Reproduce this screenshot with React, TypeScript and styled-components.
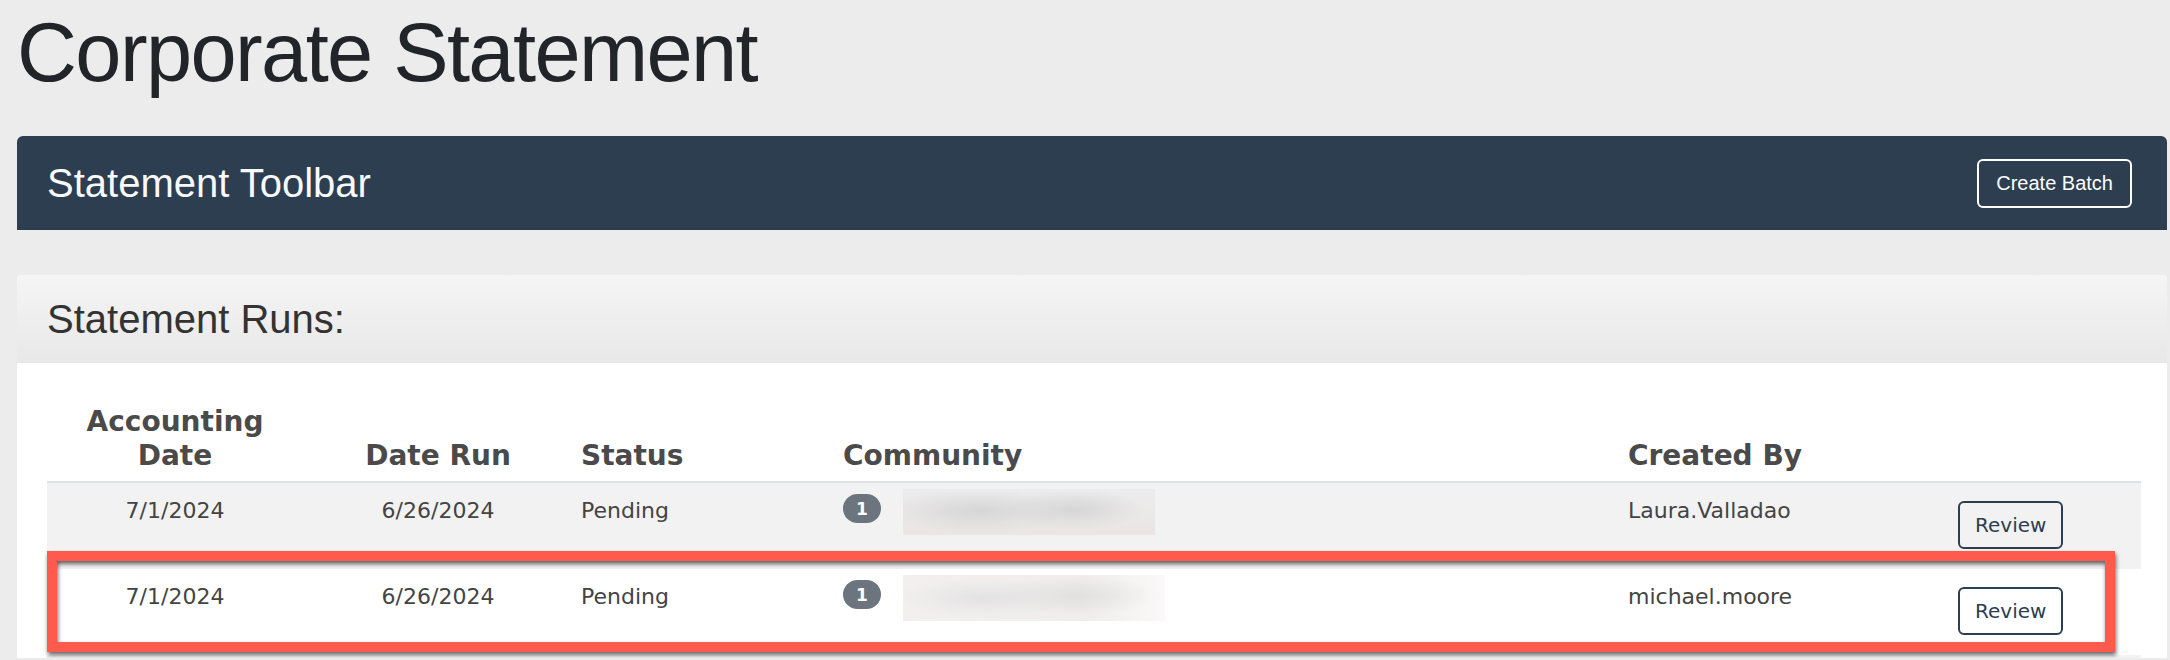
import React from "react";
import styled, { createGlobalStyle } from "styled-components";

const GlobalStyle = createGlobalStyle`
  html, body { margin: 0; padding: 0; background: #ececec; }
  body { font-family: "Liberation Sans", Arial, sans-serif; overflow: hidden; }
  * { box-sizing: border-box; }
`;

const COLS = "256px 270px 262px 785px 330px 1fr";

const Page = styled.div`
  padding: 0 3px 0 17px;
`;

const Title = styled.h1`
  margin: 8px 0 38px;
  font-family: "Liberation Sans", Arial, sans-serif;
  font-size: 83px;
  letter-spacing: -1.6px;
  line-height: 90px;
  font-weight: 400;
  color: #212529;
`;

const Toolbar = styled.div`
  height: 94px;
  display: flex;
  align-items: center;
  justify-content: space-between;
  padding: 0 35px 0 30px;
  background: #2c3e50;
  border-radius: 6px 6px 0 0;
`;

const ToolbarTitle = styled.h2`
  margin: 0;
  font-size: 40px;
  line-height: 1;
  font-weight: 400;
  color: #f8f9fa;
`;

const LightButton = styled.button`
  font-family: "Liberation Sans", Arial, sans-serif;
  font-size: 20px;
  line-height: 25px;
  padding: 10px 17px;
  border: 2px solid #ffffff;
  border-radius: 6px;
  background: transparent;
  color: #ffffff;
`;

const Panel = styled.section`
  margin-top: 45px;
  background: #ffffff;
  border-radius: 4px 4px 0 0;
`;

const PanelHeader = styled.div`
  height: 88px;
  display: flex;
  align-items: center;
  padding: 0 30px;
  background: linear-gradient(#f5f5f5, #e8e8e8);
  border-radius: 4px 4px 0 0;
`;

const PanelTitle = styled.h3`
  margin: 0;
  font-size: 40px;
  line-height: 1;
  font-weight: 400;
  color: #333333;
`;

const PanelBody = styled.div`
  padding: 42px 26px 0 30px;
`;

const HeadRow = styled.div`
  display: grid;
  grid-template-columns: ${COLS};
  align-items: end;
  border-bottom: 2px solid #dee2e6;
`;

const Th = styled.div<{ $center?: boolean }>`
  padding: 0 8px 8px;
  font-family: "DejaVu Sans", Verdana, sans-serif;
  font-weight: 700;
  font-size: 28px;
  line-height: 34px;
  color: #4a4a4a;
  text-align: ${(p) => (p.$center ? "center" : "left")};
`;

const Row = styled.div<{ $striped?: boolean; $last?: boolean }>`
  position: relative;
  display: grid;
  grid-template-columns: ${COLS};
  background: ${(p) => (p.$striped ? "#f2f2f2" : "#ffffff")};
  border-bottom: ${(p) => (p.$last ? "3px solid #f2f2f2" : "none")};
`;

const Td = styled.div<{ $center?: boolean }>`
  padding: 13px 8px 20px;
  font-family: "DejaVu Sans", Verdana, sans-serif;
  font-size: 22px;
  line-height: 29px;
  color: #444444;
  text-align: ${(p) => (p.$center ? "center" : "left")};
`;

const CommunityCell = styled.div`
  display: flex;
  align-items: flex-start;
  gap: 22px;
  padding: 6px 8px 0;
`;

const Badge = styled.span`
  margin-top: 5px;
  display: inline-flex;
  align-items: center;
  justify-content: center;
  width: 38px;
  height: 29px;
  border-radius: 15px;
  background: #6c757d;
  color: #ffffff;
  font-family: "DejaVu Sans", Verdana, sans-serif;
  font-weight: 700;
  font-size: 17px;
`;

const Redacted = styled.div<{ $w: number; $onGray?: boolean }>`
  width: ${(p) => p.$w}px;
  height: 46px;
  background: ${(p) =>
    p.$onGray
      ? `radial-gradient(ellipse 90px 22px at 30% 48%, #d6d6d6, rgba(214,214,214,0) 100%),
         radial-gradient(ellipse 70px 20px at 68% 45%, #d6d6d6, rgba(214,214,214,0) 100%),
         linear-gradient(#ececec, #ebe5e5)`
      : `radial-gradient(ellipse 90px 20px at 32% 50%, #e3e3e3, rgba(227,227,227,0) 100%),
         radial-gradient(ellipse 80px 20px at 66% 45%, #e2dfdf, rgba(226,223,223,0) 100%),
         linear-gradient(90deg, #f3efef, #f1eded 70%, #faf8f8)`};
`;

const ActionCell = styled.div`
  padding: 18px 8px 20px;
`;

const ReviewButton = styled.button`
  font-family: "DejaVu Sans", Verdana, sans-serif;
  font-size: 20px;
  line-height: 30px;
  padding: 7px 15px;
  border: 2px solid #2c3e50;
  border-radius: 6px;
  background: transparent;
  color: #2c3e50;
`;

const Highlight = styled.div`
  position: absolute;
  top: -18px;
  left: 0;
  right: 26px;
  height: 101px;
  border: 10px solid #ff5a4e;
  filter: drop-shadow(1px 3px 2px rgba(0, 0, 0, 0.6));
  pointer-events: none;
`;

type Run = {
  accounting: string;
  dateRun: string;
  status: string;
  count: number;
  redactedWidth: number;
  createdBy: string;
};

const runs: Run[] = [
  { accounting: "7/1/2024", dateRun: "6/26/2024", status: "Pending", count: 1, redactedWidth: 252, createdBy: "Laura.Valladao" },
  { accounting: "7/1/2024", dateRun: "6/26/2024", status: "Pending", count: 1, redactedWidth: 262, createdBy: "michael.moore" },
];

export default function App() {
  return (
    <>
      <GlobalStyle />
      <Page>
        <Title>Corporate Statement</Title>
        <Toolbar>
          <ToolbarTitle>Statement Toolbar</ToolbarTitle>
          <LightButton>Create Batch</LightButton>
        </Toolbar>
        <Panel>
          <PanelHeader>
            <PanelTitle>Statement Runs:</PanelTitle>
          </PanelHeader>
          <PanelBody>
            <HeadRow>
              <Th $center>
                Accounting
                <br />
                Date
              </Th>
              <Th $center>Date Run</Th>
              <Th>Status</Th>
              <Th>Community</Th>
              <Th>Created By</Th>
              <Th />
            </HeadRow>
            {runs.map((r, i) => (
              <Row key={i} $striped={i % 2 === 0} $last={i === runs.length - 1}>
                <Td $center>{r.accounting}</Td>
                <Td $center>{r.dateRun}</Td>
                <Td>{r.status}</Td>
                <CommunityCell>
                  <Badge>{r.count}</Badge>
                  <Redacted $w={r.redactedWidth} $onGray={i % 2 === 0} />
                </CommunityCell>
                <Td>{r.createdBy}</Td>
                <ActionCell>
                  <ReviewButton>Review</ReviewButton>
                </ActionCell>
                {i === 1 && <Highlight />}
              </Row>
            ))}
          </PanelBody>
        </Panel>
      </Page>
    </>
  );
}
